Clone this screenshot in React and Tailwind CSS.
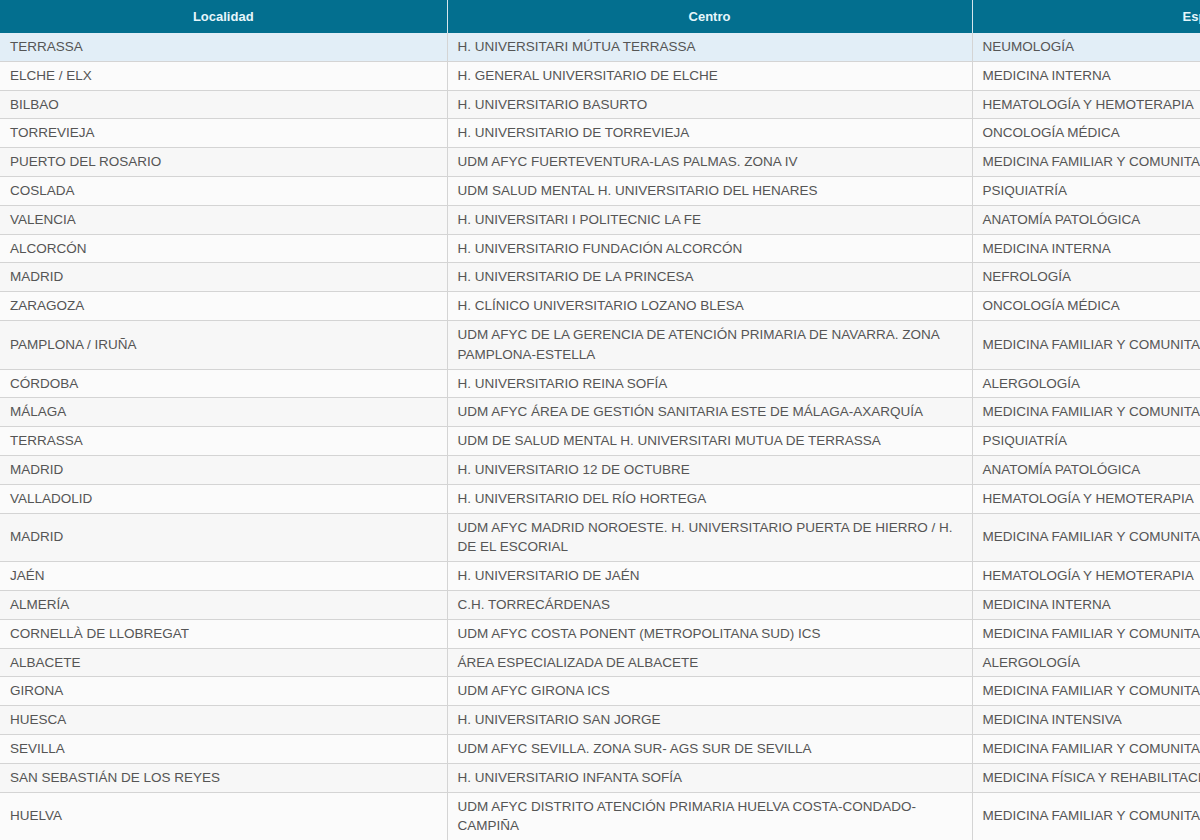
const rows = [
["TERRASSA","H. UNIVERSITARI MÚTUA TERRASSA","NEUMOLOGÍA"],
["ELCHE / ELX","H. GENERAL UNIVERSITARIO DE ELCHE","MEDICINA INTERNA"],
["BILBAO","H. UNIVERSITARIO BASURTO","HEMATOLOGÍA Y HEMOTERAPIA"],
["TORREVIEJA","H. UNIVERSITARIO DE TORREVIEJA","ONCOLOGÍA MÉDICA"],
["PUERTO DEL ROSARIO","UDM AFYC FUERTEVENTURA-LAS PALMAS. ZONA IV","MEDICINA FAMILIAR Y COMUNITARIA"],
["COSLADA","UDM SALUD MENTAL H. UNIVERSITARIO DEL HENARES","PSIQUIATRÍA"],
["VALENCIA","H. UNIVERSITARI I POLITECNIC LA FE","ANATOMÍA PATOLÓGICA"],
["ALCORCÓN","H. UNIVERSITARIO FUNDACIÓN ALCORCÓN","MEDICINA INTERNA"],
["MADRID","H. UNIVERSITARIO DE LA PRINCESA","NEFROLOGÍA"],
["ZARAGOZA","H. CLÍNICO UNIVERSITARIO LOZANO BLESA","ONCOLOGÍA MÉDICA"],
["PAMPLONA / IRUÑA","UDM AFYC DE LA GERENCIA DE ATENCIÓN PRIMARIA DE NAVARRA. ZONA PAMPLONA-ESTELLA","MEDICINA FAMILIAR Y COMUNITARIA"],
["CÓRDOBA","H. UNIVERSITARIO REINA SOFÍA","ALERGOLOGÍA"],
["MÁLAGA","UDM AFYC ÁREA DE GESTIÓN SANITARIA ESTE DE MÁLAGA-AXARQUÍA","MEDICINA FAMILIAR Y COMUNITARIA"],
["TERRASSA","UDM DE SALUD MENTAL H. UNIVERSITARI MUTUA DE TERRASSA","PSIQUIATRÍA"],
["MADRID","H. UNIVERSITARIO 12 DE OCTUBRE","ANATOMÍA PATOLÓGICA"],
["VALLADOLID","H. UNIVERSITARIO DEL RÍO HORTEGA","HEMATOLOGÍA Y HEMOTERAPIA"],
["MADRID","UDM AFYC MADRID NOROESTE. H. UNIVERSITARIO PUERTA DE HIERRO / H. DE EL ESCORIAL","MEDICINA FAMILIAR Y COMUNITARIA"],
["JAÉN","H. UNIVERSITARIO DE JAÉN","HEMATOLOGÍA Y HEMOTERAPIA"],
["ALMERÍA","C.H. TORRECÁRDENAS","MEDICINA INTERNA"],
["CORNELLÀ DE LLOBREGAT","UDM AFYC COSTA PONENT (METROPOLITANA SUD) ICS","MEDICINA FAMILIAR Y COMUNITARIA"],
["ALBACETE","ÁREA ESPECIALIZADA DE ALBACETE","ALERGOLOGÍA"],
["GIRONA","UDM AFYC GIRONA ICS","MEDICINA FAMILIAR Y COMUNITARIA"],
["HUESCA","H. UNIVERSITARIO SAN JORGE","MEDICINA INTENSIVA"],
["SEVILLA","UDM AFYC SEVILLA. ZONA SUR- AGS SUR DE SEVILLA","MEDICINA FAMILIAR Y COMUNITARIA"],
["SAN SEBASTIÁN DE LOS REYES","H. UNIVERSITARIO INFANTA SOFÍA","MEDICINA FÍSICA Y REHABILITACIÓN"],
["HUELVA","UDM AFYC DISTRITO ATENCIÓN PRIMARIA HUELVA COSTA-CONDADO-CAMPIÑA","MEDICINA FAMILIAR Y COMUNITARIA"],
];
export default function App() {
  return (
    <div className="w-[1200px] h-[840px] overflow-hidden bg-white" style={{fontFamily:'"Liberation Sans", Arial, sans-serif'}}>
      <table className="w-[1472px] border-collapse table-fixed text-[13.5px] text-[#555]">
        <colgroup><col className="w-[447px]"/><col className="w-[525px]"/><col className="w-[500px]"/></colgroup>
        <thead>
          <tr className="bg-[#036f8f] text-[#e6f6fb] h-[33px] text-[13px]">
            <th className="border-r border-[#d6e6ec] font-bold">Localidad</th>
            <th className="border-r border-[#d6e6ec] font-bold">Centro</th>
            <th className="font-bold">Especialidad</th>
          </tr>
        </thead>
        <tbody>
          {rows.map((r,i)=>(
            <tr key={i} className={i===0?"bg-[#e2eef7]":i%2?"bg-[#fbfbfb]":"bg-[#f7f7f7]"}>
              {r.map((c,j)=>(
                <td key={j} className="border-b border-r border-[#d4d4d4] px-[10px] py-[4px] leading-[19.8px] align-middle">{c}</td>
              ))}
            </tr>
          ))}
        </tbody>
      </table>
    </div>
  );
}
